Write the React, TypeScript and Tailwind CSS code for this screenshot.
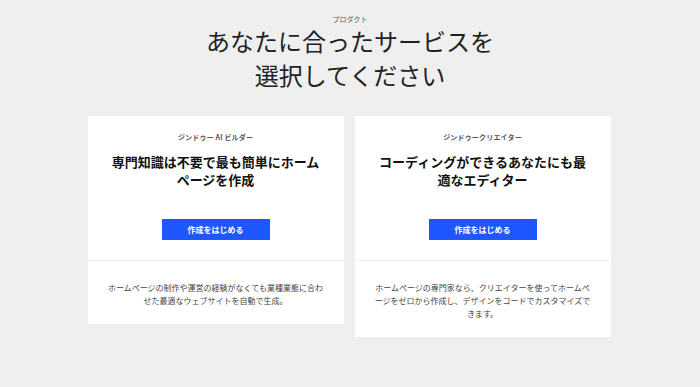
import React from "react";

const cards = [
  {
    label: "ジンドゥー AI ビルダー",
    title: "専門知識は不要で最も簡単にホームページを作成",
    desc: "ホームページの制作や運営の経験がなくても業種業態に合わせた最適なウェブサイトを自動で生成。",
  },
  {
    label: "ジンドゥークリエイター",
    title: "コーディングができるあなたにも最適なエディター",
    desc: "ホームページの専門家なら、クリエイターを使ってホームページをゼロから作成し、デザインをコードでカスタマイズできます。",
  },
];

export default function App() {
  return (
    <div
      className="min-h-[387px] w-full bg-[#efefef] text-[#222] flex flex-col items-center"
      style={{ fontFamily: '"Noto Sans CJK JP", "Noto Sans", sans-serif' }}
    >
      {/* Header */}
      <p className="mt-[14px] text-[7px] leading-[10px] text-[#555]">プロダクト</p>
      <h1 className="text-[24px] leading-[34px] font-normal text-center text-[#222]">
        あなたに合ったサービスを
        <br />
        選択してください
      </h1>

      {/* Cards */}
      <div className="mt-[24px] flex items-start gap-[11px] ml-[-2px]">
        {cards.map((c) => (
          <div key={c.label} className="w-[256px] bg-white flex flex-col">
            <div className="px-[20px] pt-[16px] pb-[20px] flex flex-col items-center border-b border-[#efefef]">
              <p className="text-[7px] leading-[10px] font-bold text-[#555] tracking-wide">{c.label}</p>
              <h2 className="mt-[11px] text-[13px] leading-[18px] font-bold text-center text-[#111]">{c.title}</h2>
              <button className="mt-[30px] w-[108px] h-[21px] bg-[#1f57ff] text-white text-[8px] font-bold">
                作成をはじめる
              </button>
            </div>
            <div className="px-[20px] pt-[20px] pb-[17px]">
              <p className="text-[8px] leading-[13px] text-[#444] text-center">{c.desc}</p>
            </div>
          </div>
        ))}
      </div>
    </div>
  );
}
